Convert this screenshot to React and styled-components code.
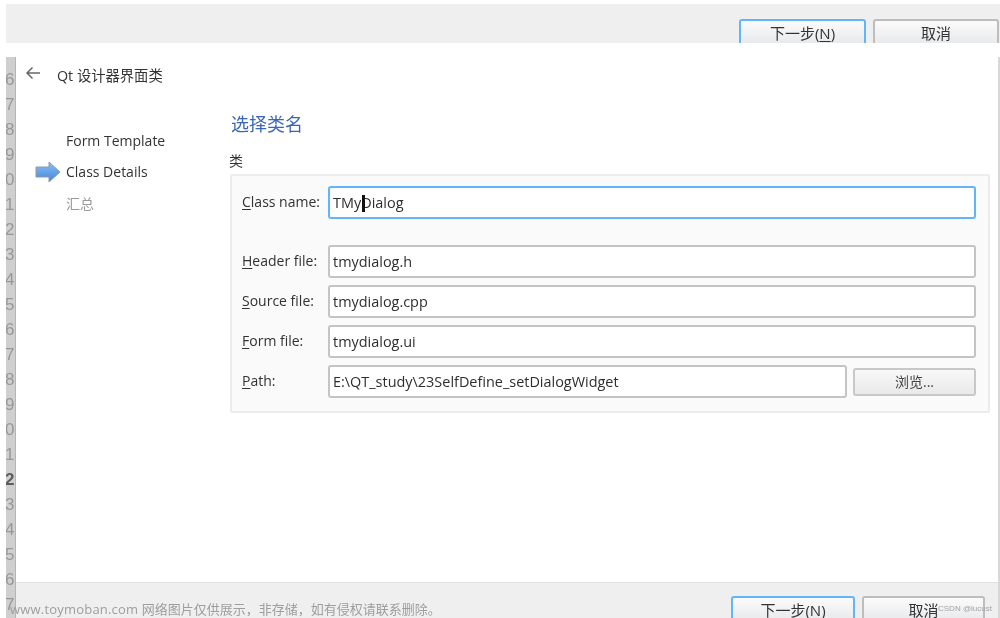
import React from "react";
import styled, { createGlobalStyle } from "styled-components";

const Global = createGlobalStyle`
  html, body { margin: 0; padding: 0; background: #fff; }
  body { font-family: "Open Sans", "Noto Sans CJK SC", sans-serif; color: #333; }
  #root { width: 1000px; height: 618px; overflow: hidden; }
`;

const Page = styled.div`
  position: relative;
  width: 1000px;
  height: 618px;
  overflow: hidden;
  display: flex;
  flex-direction: column;
  background: #fff;
  filter: blur(0.35px);
`;

const TopStrip = styled.div`
  margin: 4px 0 0 6px;
  height: 39px;
  flex: none;
  background: #efefef;
  overflow: hidden;
  display: flex;
  justify-content: flex-end;
  gap: 7px;
  padding: 15px 1px 0 0;
  box-sizing: border-box;
`;

const WizardButton = styled.div`
  flex: none;
  box-sizing: border-box;
  width: ${(p) => p.$w}px;
  height: 28px;
  border: ${(p) => (p.$primary ? "2px solid #63b5fa" : "2px solid #bdbdbd")};
  border-radius: 3px;
  background: linear-gradient(#fbfbfb, #e6e8ea);
  font: 15px/24px "Open Sans", "Noto Sans CJK SC", sans-serif;
  color: #333;
  text-align: center;
`;

const Mnemonic = styled.span`
  text-decoration: underline;
  text-underline-offset: 2px;
  text-decoration-thickness: 1px;
`;

const Main = styled.div`
  margin: 14px 0 0 6px;
  flex: 1;
  min-height: 0;
  display: flex;
`;

const Gutter = styled.div`
  flex: none;
  width: 10px;
  background: #cfcfcf;
  border-right: 1px solid #b5b5b5;
  box-sizing: border-box;
  overflow: hidden;
  padding-top: 10px;
  display: flex;
  flex-direction: column;
  font: 17px/25px "Liberation Sans", sans-serif;
`;

const LineNo = styled.div`
  height: 25px;
  flex: none;
  width: 10px;
  margin-left: -1px;
  font-weight: ${(p) => (p.$bold ? 700 : 400)};
  color: ${(p) => (p.$bold ? "#5c5c5c" : "#989898")};
`;

const Dialog = styled.div`
  flex: 1;
  min-width: 0;
  display: flex;
  flex-direction: column;
  border-right: 2px solid #d8d8d8;
`;

const Body = styled.div`
  flex: 1;
  min-height: 0;
  background: #fff;
`;

const Header = styled.div`
  display: flex;
  align-items: center;
  height: 20px;
  padding: 8px 0 0 9px;
  gap: 16px;
  font-size: 14.3px;
  color: #333;
`;

const HeaderTitle = styled.span`
  margin-top: -2px;
`;

const Columns = styled.div`
  display: flex;
  padding-top: 17px;
`;

const Steps = styled.div`
  flex: none;
  width: 214px;
  display: flex;
  flex-direction: column;
  padding-top: 23px;
`;

const Step = styled.div`
  height: 31px;
  display: flex;
  align-items: center;
  font-size: 14px;
  color: ${(p) => (p.$muted ? "#9a9a9a" : "#333")};
  padding-left: ${(p) => (p.$active ? "19px" : "50px")};
  gap: 5px;
`;

const Panel = styled.div`
  flex: 1;
  min-width: 0;
  padding-right: 8px;
  display: flex;
  flex-direction: column;
`;

const PageTitle = styled.div`
  font-size: 18px;
  line-height: 24px;
  color: #3a66b5;
  margin: 10px 0 0 1px;
`;

const GroupLabel = styled.div`
  font-size: 14px;
  line-height: 18px;
  margin-top: 16px;
  margin-left: -1px;
  color: #333;
`;

const GroupBox = styled.div`
  box-sizing: border-box;
  height: 239px;
  margin-top: 4px;
  background: #fafafa;
  border: 2px solid #ececec;
  border-radius: 2px;
  padding: 10px 12px 0 10px;
  display: flex;
  flex-direction: column;
`;

const FormRow = styled.div`
  display: flex;
  align-items: center;
  gap: 6px;
  height: 33px;
  margin-top: ${(p) => p.$mt || 0}px;
`;

const FieldLabel = styled.div`
  flex: none;
  width: 80px;
  font-size: 14px;
  color: #333;
  white-space: nowrap;
  margin-top: -2px;
`;

const Field = styled.div`
  position: relative;
  flex: 1;
  min-width: 0;
  height: 33px;
  box-sizing: border-box;
  background: #fff;
  border: ${(p) => (p.$focus ? "2px solid #63b5fa" : "2px solid #c4c4c4")};
  border-radius: 3px;
  padding-left: 3px;
  font-size: 14.45px;
  line-height: 29px;
  color: #2e2e2e;
  white-space: nowrap;
`;

const Caret = styled.span`
  position: absolute;
  left: 32px;
  top: 7px;
  width: 3px;
  height: 17px;
  background: #111;
`;

const BrowseButton = styled.div`
  flex: none;
  box-sizing: border-box;
  width: 123px;
  height: 28px;
  border: 2px solid #c8c8c8;
  border-radius: 3px;
  background: linear-gradient(#f8f8f8, #e9e9e9);
  font-size: 14px;
  line-height: 24px;
  text-align: center;
  color: #444;
`;

const Footer = styled.div`
  flex: none;
  height: 36px;
  box-sizing: border-box;
  background: #efefef;
  border-top: 1px solid #e2e2e2;
  overflow: hidden;
  display: flex;
  justify-content: flex-end;
  gap: 7px;
  padding: 13px 13px 0 0;
`;

const Watermark = styled.div`
  position: absolute;
  left: 10px;
  bottom: 0;
  font: 13px "Open Sans", "Noto Sans CJK SC", sans-serif;
  color: #9e9e9e;
  white-space: nowrap;
`;

const WatermarkUrl = styled.span`
  letter-spacing: 0.2px;
`;

const Credit = styled.div`
  position: absolute;
  left: 938px;
  bottom: 5px;
  font: 8px "Liberation Sans", sans-serif;
  color: #a4a4a4;
  white-space: nowrap;
`;

const BackArrow = () => (
  <svg width="16" height="14" viewBox="0 0 16 14" style={{ marginTop: -4 }}>
    <path d="M15 7H2M7.5 1.5 2 7l5.5 5.5" fill="none" stroke="#666" strokeWidth="1.5" />
  </svg>
);

const StepArrow = () => (
  <svg width="26" height="22" viewBox="0 0 26 22">
    <defs>
      <linearGradient id="sa" x1="0" y1="0" x2="0" y2="1">
        <stop offset="0" stopColor="#8fc0f2" />
        <stop offset="1" stopColor="#3f86dc" />
      </linearGradient>
    </defs>
    <path d="M1 6h13V1l11 10-11 10v-5H1z" fill="url(#sa)" stroke="#8f9aa8" strokeWidth="1" />
  </svg>
);

const lines = ["6", "7", "8", "9", "0", "1", "2", "3", "4", "5", "6", "7", "8", "9", "0", "1", "2", "3", "4", "5", "6", "7"];

export default function App() {
  return (
    <>
      <Global />
      <Page>
        <TopStrip>
          <WizardButton $w={127} $primary>下一步(<Mnemonic>N</Mnemonic>)</WizardButton>
          <WizardButton $w={126}>取消</WizardButton>
        </TopStrip>
        <Main>
          <Gutter>
            {lines.map((n, i) => (
              <LineNo key={i} $bold={i === 16}>{n}</LineNo>
            ))}
          </Gutter>
          <Dialog>
            <Body>
              <Header>
                <BackArrow />
                <HeaderTitle>Qt 设计器界面类</HeaderTitle>
              </Header>
              <Columns>
                <Steps>
                  <Step>Form Template</Step>
                  <Step $active><StepArrow />Class Details</Step>
                  <Step $muted>汇总</Step>
                </Steps>
                <Panel>
                  <PageTitle>选择类名</PageTitle>
                  <GroupLabel>类</GroupLabel>
                  <GroupBox>
                    <FormRow>
                      <FieldLabel><Mnemonic>C</Mnemonic>lass name:</FieldLabel>
                      <Field $focus>TMyDialog<Caret /></Field>
                    </FormRow>
                    <FormRow $mt={26}>
                      <FieldLabel><Mnemonic>H</Mnemonic>eader file:</FieldLabel>
                      <Field>tmydialog.h</Field>
                    </FormRow>
                    <FormRow $mt={7}>
                      <FieldLabel><Mnemonic>S</Mnemonic>ource file:</FieldLabel>
                      <Field>tmydialog.cpp</Field>
                    </FormRow>
                    <FormRow $mt={7}>
                      <FieldLabel><Mnemonic>F</Mnemonic>orm file:</FieldLabel>
                      <Field>tmydialog.ui</Field>
                    </FormRow>
                    <FormRow $mt={7}>
                      <FieldLabel><Mnemonic>P</Mnemonic>ath:</FieldLabel>
                      <Field>E:\QT_study\23SelfDefine_setDialogWidget</Field>
                      <BrowseButton>浏览...</BrowseButton>
                    </FormRow>
                  </GroupBox>
                </Panel>
              </Columns>
            </Body>
            <Footer>
              <WizardButton $w={124} $primary>下一步(<Mnemonic>N</Mnemonic>)</WizardButton>
              <WizardButton $w={123}>取消</WizardButton>
            </Footer>
          </Dialog>
        </Main>
        <Watermark><WatermarkUrl>www.toymoban.com</WatermarkUrl> 网络图片仅供展示，非存储，如有侵权请联系删除。</Watermark>
        <Credit>CSDN @lucust</Credit>
      </Page>
    </>
  );
}
